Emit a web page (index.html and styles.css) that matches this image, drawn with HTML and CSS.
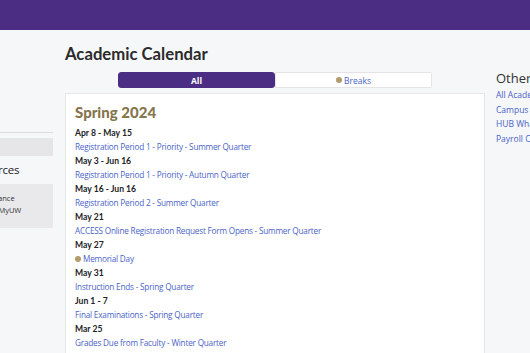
FILE: index.html
```html
<!DOCTYPE html>
<html lang="en">
<head>
    <meta charset="utf-8">
    <meta name="viewport" content="width=device-width, initial-scale=1">
    <title>Academic Calendar - MyUW</title>
    <link rel="stylesheet" href="styles.css">
</head>
<body>
    <header class="topbar"></header>

    <div class="layout">
        <aside class="sidebar">
            <ul class="nav">
                <li>Home</li>
                <li>Academics</li>
                <li>Husky Experience</li>
                <li class="nav-active">Calendar</li>
            </ul>
            <h2 class="sidebar-title">Resources</h2>
            <div class="sidebar-box">
                <p>Tuition &amp; Finance</p>
                <p>Learn about MyUW</p>
            </div>
        </aside>

        <main class="main">
            <h1>Academic Calendar</h1>

            <div class="toggle">
                <button class="toggle-btn toggle-on">All</button>
                <button class="toggle-btn"><span class="dot"></span>Breaks</button>
            </div>

            <section class="card">
                <h2 class="term">Spring 2024</h2>
                <ul class="events">
                    <li>
                        <div class="date">Apr 8 - May 15</div>
                        <a href="#">Registration Period 1 - Priority - Summer Quarter</a>
                    </li>
                    <li>
                        <div class="date">May 3 - Jun 16</div>
                        <a href="#">Registration Period 1 - Priority - Autumn Quarter</a>
                    </li>
                    <li>
                        <div class="date">May 16 - Jun 16</div>
                        <a href="#">Registration Period 2 - Summer Quarter</a>
                    </li>
                    <li>
                        <div class="date">May 21</div>
                        <a href="#">ACCESS Online Registration Request Form Opens - Summer Quarter</a>
                    </li>
                    <li>
                        <div class="date">May 27</div>
                        <a href="#"><span class="dot"></span>Memorial Day</a>
                    </li>
                    <li>
                        <div class="date">May 31</div>
                        <a href="#">Instruction Ends - Spring Quarter</a>
                    </li>
                    <li>
                        <div class="date">Jun 1 - 7</div>
                        <a href="#">Final Examinations - Spring Quarter</a>
                    </li>
                    <li>
                        <div class="date">Mar 25</div>
                        <a href="#">Grades Due from Faculty - Winter Quarter</a>
                    </li>
                </ul>
            </section>
        </main>

        <aside class="other">
            <h2>Other Calendars</h2>
            <a href="#">All Academic Calendars</a>
            <a href="#">Campus Events</a>
            <a href="#">HUB What's Happening</a>
            <a href="#">Payroll Calendar</a>
        </aside>
    </div>
</body>
</html>
```

FILE: styles.css
```css
* {
    margin: 0;
    padding: 0;
    box-sizing: border-box;
}

body {
    font-family: 'Open Sans', 'Liberation Sans', sans-serif;
    background: #f6f7f9;
    color: #222;
    overflow: hidden;
}

.topbar {
    height: 30px;
    background: #4b2e83;
}

.layout {
    display: flex;
    align-items: flex-start;
    margin-left: -60px;
}

/* left menu, mostly scrolled out of view */
.sidebar {
    width: 113px;
    flex-shrink: 0;
    margin-top: 102px;
}

.nav {
    list-style: none;
    border-top: 1px solid #dcdcdc;
    padding-top: 5px;
}

.nav li {
    display: none;
    height: 18px;
}

.nav li.nav-active {
    display: block;
    background: #e6e6e8;
    color: #e6e6e8;
}

.sidebar-title {
    font-size: 11.5px;
    font-weight: 400;
    letter-spacing: -0.2px;
    padding-left: 26px;
    margin: 6px 0 6px;
    line-height: 16px;
}

.sidebar-box {
    background: #e9e9eb;
    padding: 8px 0 10px 14px;
    height: 44px;
}

.sidebar-box p {
    font-size: 7.5px;
    line-height: 12px;
    color: #333;
}

.main {
    width: 420px;
    flex-shrink: 0;
    margin-left: 12px;
}

h1 {
    font-family: Lato, 'Open Sans', sans-serif;
    font-size: 16.7px;
    font-weight: 700;
    line-height: 22px;
    color: #2b2b2b;
    margin-top: 13px;
}

.toggle {
    display: flex;
    width: 314px;
    margin: 7px auto 5px;
}

.toggle-btn {
    flex: 1;
    height: 16px;
    border: 1px solid #e4e4e8;
    background: white;
    font-family: inherit;
    font-size: 8.5px;
    color: #4a63c7;
    display: flex;
    align-items: center;
    justify-content: center;
}

.toggle-on {
    background: #4b2e83;
    border-color: #4b2e83;
    color: white;
    font-weight: 700;
    border-radius: 3px;
}

.toggle-btn:last-child {
    border-radius: 0 2px 2px 0;
}

.dot {
    display: inline-block;
    width: 6px;
    height: 6px;
    border-radius: 50%;
    background: #b39c6b;
    margin-right: 2px;
}

.card {
    background: white;
    border: 1px solid #e6e7ea;
    padding: 8px 9px 20px;
}

.term {
    font-family: Lato, 'Open Sans', sans-serif;
    font-size: 15px;
    font-weight: 900;
    color: #85754d;
    line-height: 20px;
    margin-bottom: 5px;
}

.events {
    list-style: none;
}

.events li {
    margin-bottom: 2px;
}

.date {
    font-family: Lato, 'Open Sans', sans-serif;
    font-size: 8.6px;
    font-weight: 700;
    line-height: 13px;
    color: #222;
}

.events a {
    display: block;
    font-size: 8.2px;
    letter-spacing: -0.2px;
    line-height: 13px;
    color: #4a63c7;
    text-decoration: none;
}

.other {
    width: 200px;
    flex-shrink: 0;
    margin: 40px 0 0 11px;
}

.other h2 {
    font-size: 13px;
    font-weight: 400;
    line-height: 17px;
    color: #333;
    margin-bottom: 1px;
}

.other a {
    display: block;
    font-size: 8.5px;
    line-height: 14.5px;
    color: #4a63c7;
    text-decoration: none;
}
```
